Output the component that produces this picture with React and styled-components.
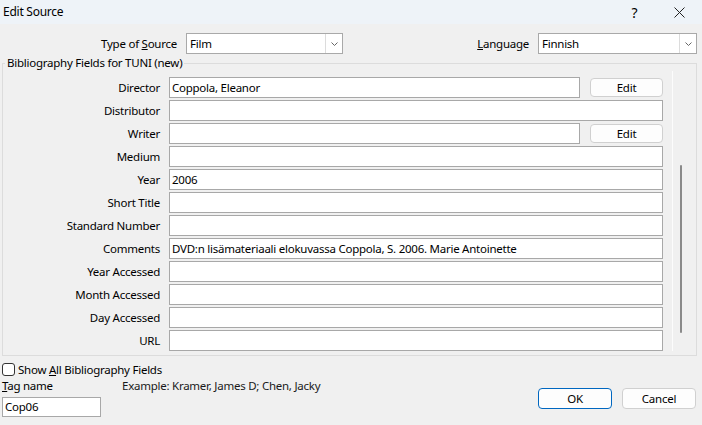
import React from "react";
import styled, { createGlobalStyle } from "styled-components";

const GlobalStyle = createGlobalStyle`
  html, body { margin: 0; padding: 0; background: #f0f0f0; }
  body {
    font-family: "Noto Sans", "Open Sans", sans-serif;
    font-size: 11.5px;
    letter-spacing: -0.25px;
    color: #000;
  }
  * { box-sizing: border-box; }
`;

const Window = styled.div`
  width: 702px;
  height: 425px;
  display: flex;
  flex-direction: column;
  background: #f0f0f0;
  overflow: hidden;
`;

const TitleBar = styled.div`
  height: 24px;
  flex: none;
  display: flex;
  align-items: center;
  background: #eef3f8;
  padding-left: 3px;
`;

const Title = styled.div`
  flex: 1;
  font-size: 12px;
  line-height: 16px;
  margin-top: -1px;
`;

const CaptionButton = styled.div`
  width: 45px;
  height: 24px;
  display: flex;
  align-items: center;
  justify-content: center;
  font-size: 14px;
  letter-spacing: 0;
`;

const TopRow = styled.div`
  display: flex;
  align-items: center;
  height: 21px;
  margin-top: 9px;
`;

const TopLabel = styled.div`
  width: ${(p) => p.$w}px;
  margin-left: ${(p) => p.$ml || 0}px;
  text-align: right;
  line-height: 16px;
`;

const Spacer = styled.div`
  flex: 1;
`;

const Combo = styled.div`
  width: ${(p) => p.$w}px;
  height: 21px;
  margin-left: 9px;
  margin-right: ${(p) => p.$mr || 0}px;
  background: #fff;
  border: 1px solid #a9a9a9;
  display: flex;
  align-items: stretch;
`;

const ComboText = styled.div`
  flex: 1;
  padding-left: 3px;
  line-height: 19px;
`;

const ComboButton = styled.div`
  width: 17px;
  border-left: 1px solid #dcdcdc;
  display: flex;
  align-items: center;
  justify-content: center;
`;

const Group = styled.fieldset`
  margin: 1px 5px 0 2px;
  padding: 0;
  border: 1px solid #dcdcdc;
  height: 301px;
  min-width: 0;
  display: flex;
`;

const Legend = styled.legend`
  margin-left: 2px;
  padding: 0 2px;
  line-height: 16px;
`;

const GroupBody = styled.div`
  flex: 1;
  display: flex;
  height: 100%;
`;

const FieldsArea = styled.div`
  flex: 1;
  padding: 6px 9px 0 0;
  display: flex;
  flex-direction: column;
  gap: 2px;
`;

const FieldRow = styled.div`
  display: grid;
  grid-template-columns: 157px 1fr;
  column-gap: 9px;
  height: 21px;
  align-items: center;
`;

const FieldLabel = styled.div`
  text-align: right;
  line-height: 16px;
`;

const FieldControls = styled.div`
  display: flex;
  align-items: flex-start;
  gap: 10px;
  height: 21px;
`;

const TextBox = styled.div`
  flex: 1;
  height: ${(p) => p.$h || 21}px;
  width: ${(p) => (p.$w ? `${p.$w}px` : "auto")};
  background: #fff;
  border: 1px solid #a8a8a8;
  padding-left: 2px;
  line-height: ${(p) => (p.$h || 21) - 2}px;
  white-space: nowrap;
  overflow: hidden;
`;

const PushButton = styled.div`
  width: ${(p) => p.$w || 74}px;
  height: ${(p) => p.$h || 21}px;
  margin-top: ${(p) => p.$mt || 0}px;
  border: 1px solid ${(p) => (p.$default ? "#0067c0" : "#d0d0d0")};
  border-radius: 4px;
  background: #fdfdfd;
  display: flex;
  align-items: center;
  justify-content: center;
  line-height: 16px;
`;

const ScrollTrack = styled.div`
  width: 24px;
  border-left: 1px solid #fcfcfc;
  padding-left: 7px;
  padding-top: 94px;
`;

const Thumb = styled.div`
  width: 2px;
  height: 168px;
  background: #8a8a8a;
  border-radius: 1px;
`;

const Bottom = styled.div`
  flex: 1;
  display: flex;
  align-items: flex-start;
`;

const BottomLeft = styled.div`
  flex: 1;
  padding-left: 2px;
  display: flex;
  flex-direction: column;
`;

const CheckRow = styled.div`
  display: flex;
  align-items: center;
  gap: 3px;
  height: 16px;
  margin-top: 5px;
`;

const CheckBox = styled.div`
  width: 13px;
  height: 13px;
  margin-top: 1px;
  border: 1px solid #333;
  border-radius: 3px;
  background: #fff;
`;

const TagRow = styled.div`
  display: flex;
  height: 16px;
  margin-top: 1px;
  line-height: 16px;
`;

const TagLabel = styled.div`
  width: 120px;
`;

const Example = styled.div`
  color: #1a1a1a;
`;

const TagBox = styled.div`
  margin-top: 3px;
`;

const Buttons = styled.div`
  display: flex;
  gap: 10px;
  margin-top: 32px;
  margin-right: 6px;
`;

const Chevron = () => (
  <svg width="9" height="6" viewBox="0 0 9 6">
    <path d="M1.5 1.5 L4.5 4.5 L7.5 1.5" fill="none" stroke="#666" strokeWidth="1" />
  </svg>
);

const CloseIcon = () => (
  <svg width="11" height="11" viewBox="0 0 11 11">
    <path d="M0.5 0.5 L10.5 10.5 M10.5 0.5 L0.5 10.5" stroke="#222" strokeWidth="1" />
  </svg>
);

const fields = [
  { label: "Director", value: "Coppola, Eleanor", edit: true },
  { label: "Distributor", value: "" },
  { label: "Writer", value: "", edit: true },
  { label: "Medium", value: "" },
  { label: "Year", value: "2006" },
  { label: "Short Title", value: "" },
  { label: "Standard Number", value: "" },
  { label: "Comments", value: "DVD:n lisämateriaali elokuvassa Coppola, S. 2006. Marie Antoinette" },
  { label: "Year Accessed", value: "" },
  { label: "Month Accessed", value: "" },
  { label: "Day Accessed", value: "" },
  { label: "URL", value: "" },
];

export default function App() {
  return (
    <>
      <GlobalStyle />
      <Window>
        <TitleBar>
          <Title>Edit Source</Title>
          <CaptionButton>?</CaptionButton>
          <CaptionButton>
            <CloseIcon />
          </CaptionButton>
        </TitleBar>
        <TopRow>
          <TopLabel $w={175} $ml={2}>
            Type of <u>S</u>ource
          </TopLabel>
          <Combo $w={157}>
            <ComboText>Film</ComboText>
            <ComboButton>
              <Chevron />
            </ComboButton>
          </Combo>
          <Spacer />
          <TopLabel>
            <u>L</u>anguage
          </TopLabel>
          <Combo $w={159} $mr={5}>
            <ComboText>Finnish</ComboText>
            <ComboButton>
              <Chevron />
            </ComboButton>
          </Combo>
        </TopRow>
        <Group>
          <Legend>Bibliography Fields for TUNI (new)</Legend>
          <GroupBody>
            <FieldsArea>
              {fields.map((f) => (
                <FieldRow key={f.label}>
                  <FieldLabel>{f.label}</FieldLabel>
                  <FieldControls>
                    <TextBox>{f.value}</TextBox>
                    {f.edit && (
                      <PushButton $w={73} $h={19} $mt={1}>
                        Edit
                      </PushButton>
                    )}
                  </FieldControls>
                </FieldRow>
              ))}
            </FieldsArea>
            <ScrollTrack>
              <Thumb />
            </ScrollTrack>
          </GroupBody>
        </Group>
        <Bottom>
          <BottomLeft>
            <CheckRow>
              <CheckBox />
              <span>
                Show <u>A</u>ll Bibliography Fields
              </span>
            </CheckRow>
            <TagRow>
              <TagLabel>
                <u>T</u>ag name
              </TagLabel>
              <Example>Example: Kramer, James D; Chen, Jacky</Example>
            </TagRow>
            <TagBox>
              <TextBox $w={99} $h={20}>
                Cop06
              </TextBox>
            </TagBox>
          </BottomLeft>
          <Buttons>
            <PushButton $default>OK</PushButton>
            <PushButton>Cancel</PushButton>
          </Buttons>
        </Bottom>
      </Window>
    </>
  );
}
